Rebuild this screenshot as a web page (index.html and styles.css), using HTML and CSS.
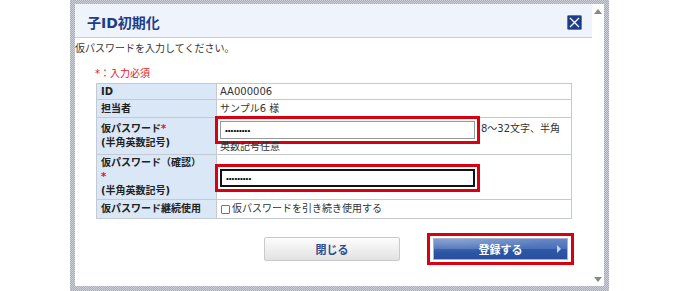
FILE: index.html
```html
<!DOCTYPE html>
<html>
<head>
    <meta charset="utf-8">
    <title>子ID初期化</title>
    <link rel="stylesheet" href="styles.css">
</head>
<body>
<div class="frame">
    <div class="dialog">
        <div class="main">
            <div class="header">
                <div class="title">子ID初期化</div>
                <svg class="close" width="15" height="15" viewBox="0 0 15 15">
                    <rect x="0.5" y="0.5" width="14" height="14" rx="1" fill="#1d3d8c" stroke="#5a78b8"/>
                    <path d="M3 3 L12 12 M12 3 L3 12" stroke="#fff" stroke-width="1.3"/>
                </svg>
            </div>

            <div class="intro">仮パスワードを入力してください。</div>
            <div class="required">*：入力必須</div>

            <table class="form">
                <tr class="r1">
                    <th>ID</th>
                    <td>AA000006</td>
                </tr>
                <tr class="r2">
                    <th>担当者</th>
                    <td>サンプル6 様</td>
                </tr>
                <tr class="r3">
                    <th>仮パスワード<span class="ast">*</span><br>(半角英数記号)</th>
                    <td><input type="password" class="pw" value="123456789"><span class="note">8～32文字、半角</span><br>英数記号任意</td>
                </tr>
                <tr class="r4">
                    <th>仮パスワード（確認）<br><span class="ast">*</span><br>(半角英数記号)</th>
                    <td><input type="password" class="pw focus" value="123456789"></td>
                </tr>
                <tr class="r5">
                    <th>仮パスワード継続使用</th>
                    <td><label class="check"><input type="checkbox" class="box">仮パスワードを引き続き使用する</label></td>
                </tr>
            </table>

            <div class="buttons">
                <div class="btn gray">閉じる</div>
                <div class="mark">
                    <div class="btn blue">登録する<span class="arrow"></span></div>
                </div>
            </div>
        </div>
        <div class="scroll">
            <span class="up"></span>
            <span class="down"></span>
        </div>
    </div>
</div>
</body>
</html>
```

FILE: styles.css
```css
html, body
{
    margin: 0;
    background: #fff;
}
body
{
    font-family: "DejaVu Sans", "Noto Sans CJK JP", sans-serif;
    font-size: 10px;
    color: #333;
}

/* outer hatched frame */
.frame
{
    margin-left: 70px;
    width: 539px;
    height: 291px;
    box-sizing: border-box;
    padding: 4px 5px 5px 5px;
    background: repeating-conic-gradient(#a9abb6 0 25%, #cfd1da 0 50%) 0 0 / 2px 2px;
}
.dialog
{
    display: flex;
    height: 100%;
    background: #fff;
}
.main
{
    width: 517px;
}
.scroll
{
    width: 12px;
    display: flex;
    flex-direction: column;
    justify-content: space-between;
    align-items: center;
    padding: 5px 0 4px 0;
}
.up
{
    width: 0;
    height: 0;
    border-left: 4px solid transparent;
    border-right: 4px solid transparent;
    border-bottom: 5px solid #888;
}
.down
{
    width: 0;
    height: 0;
    border-left: 4px solid transparent;
    border-right: 4px solid transparent;
    border-top: 5px solid #888;
}

.header
{
    height: 33px;
    border-bottom: 1px solid #c6cddb;
    background: #eff4fc;
    display: flex;
    align-items: center;
    justify-content: space-between;
    padding: 0 10px 0 12px;
}
.title
{
    font-size: 14px;
    font-weight: bold;
    color: #1f3d8a;
    margin-top: 2px;
}
.close
{
    display: block;
    margin-top: 4px;
}

.intro
{
    margin-top: 3px;
    line-height: 16px;
}
.required
{
    margin-top: 9px;
    padding-left: 20px;
    line-height: 16px;
    color: #e8141e;
}

.form
{
    margin: 1px 0 0 21px;
    width: 476px;
    border-collapse: collapse;
}
.form th, .form td
{
    border: 1px solid #c3cad6;
    padding: 0 3px;
    line-height: 14px;
    text-align: left;
    vertical-align: middle;
}
.form th
{
    width: 112px;
    background: #dae7f7;
    color: #222;
    font-weight: bold;
    padding-left: 4px;
}
.r1 { height: 16px; }
.r2 { height: 18px; }
.r3 { height: 36px; }
.r4 { height: 45px; }
.r5 { height: 19px; }
.ast
{
    color: #e8141e;
}
.note
{
    margin-left: 6px;
}

.pw
{
    width: 255px;
    height: 18px;
    box-sizing: border-box;
    margin: 3px 0 1px 0;
    padding: 0 4px;
    border: 1px solid #999;
    border-radius: 0;
    font-size: 8px;
    vertical-align: middle;
    outline: 3px solid #d9000f;
    outline-offset: 2px;
}
.focus
{
    border: 2px solid #111;
}
.check
{
    display: flex;
    align-items: center;
}
.box
{
    -webkit-appearance: none;
    appearance: none;
    width: 9px;
    height: 9px;
    margin: 0 2px 0 1px;
    border: 1px solid #777;
    border-radius: 1px;
    background: #fff;
}

.buttons
{
    display: flex;
    justify-content: flex-end;
    align-items: center;
    padding-right: 18px;
    margin-top: 14px;
}
.btn
{
    display: flex;
    align-items: center;
    justify-content: center;
    font-weight: bold;
    font-size: 11px;
    box-sizing: border-box;
}
.gray
{
    width: 136px;
    height: 24px;
    margin-right: 27px;
    color: #2b4d8e;
    border: 1px solid #c9c9cc;
    border-radius: 2px;
    background: linear-gradient(#fdfdfd, #ececec 60%, #e2e2e4);
}
.mark
{
    border: 3px solid #d9000f;
    padding: 2px 3px;
}
.blue
{
    position: relative;
    width: 135px;
    height: 22px;
    color: #fff;
    font-size: 11px;
    border: 1px solid #aab5cc;
    background:
        radial-gradient(ellipse 90px 14px at 20px 0px, rgba(255,255,255,0.25), rgba(255,255,255,0) 100%),
        linear-gradient(#6687c6, #4a70b8 48%, #2e57a5 52%, #28509e);
}
.arrow
{
    position: absolute;
    right: 6px;
    top: 6px;
    width: 0;
    height: 0;
    border-top: 4px solid transparent;
    border-bottom: 4px solid transparent;
    border-left: 4px solid #c5d2ee;
}
```
